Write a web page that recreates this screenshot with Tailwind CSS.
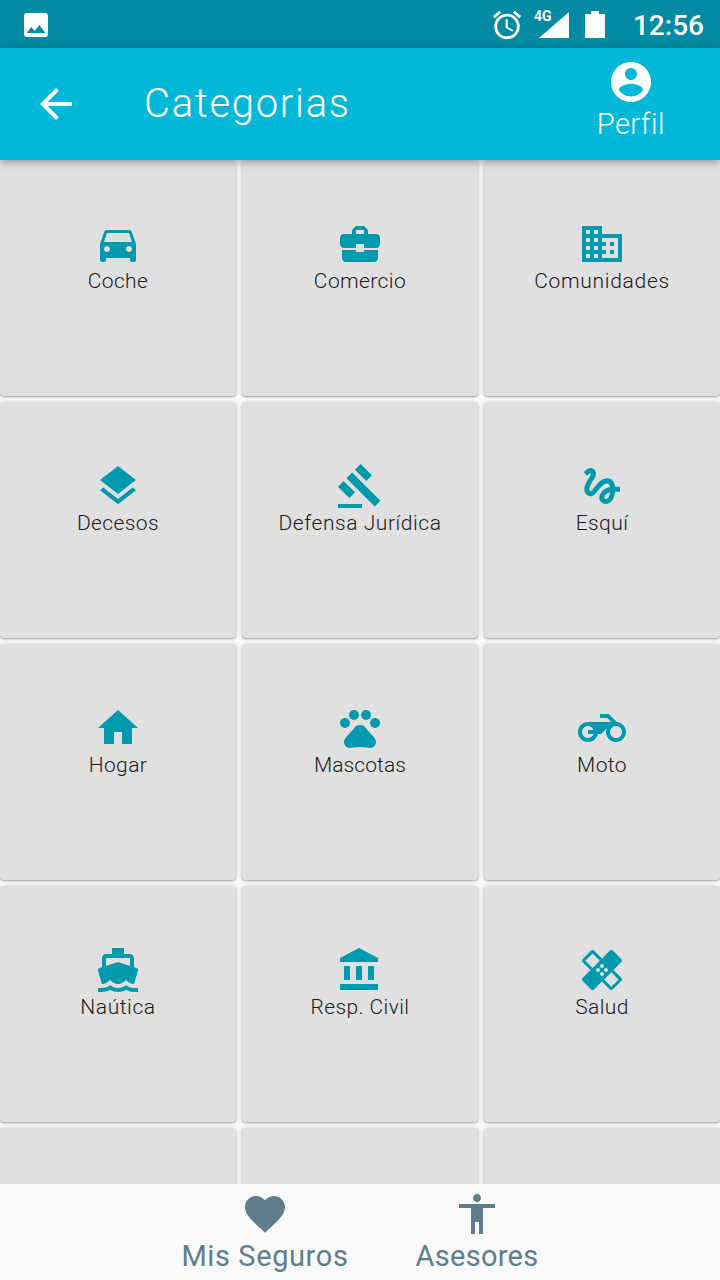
<!DOCTYPE html>
<html lang="es">
<head>
    <meta charset="UTF-8">
    <meta name="viewport" content="width=device-width, initial-scale=1.0">
    <title>Categorias</title>
    <script src="https://cdn.jsdelivr.net/npm/@tailwindcss/browser@4"></script>
</head>
<body class="font-[Roboto,sans-serif]">
<div class="flex flex-col w-[720px] h-[1280px] overflow-hidden bg-[#f8f8f8]">

    <!-- Status bar -->
    <div class="flex items-center h-12 shrink-0 bg-[#028ba3] text-white">
        <svg class="w-8 h-8 ml-5 mt-0.5 fill-white" viewBox="0 0 24 24"><path d="M21 19V5c0-1.1-.9-2-2-2H5c-1.1 0-2 .9-2 2v14c0 1.1.9 2 2 2h14c1.1 0 2-.9 2-2zM8.5 13.5l2.5 3.01L14.5 12l4.5 6H5l3.5-4.5z"/></svg>
        <svg class="w-[34px] h-[34px] ml-auto mt-0.5 fill-white" viewBox="0 0 24 24"><path d="M22 5.72l-4.6-3.86-1.29 1.53 4.6 3.86L22 5.72zM7.88 3.39L6.6 1.86 2 5.71l1.29 1.53 4.59-3.85zM12.5 8H11v6l4.75 2.85.75-1.23-4-2.37V8zM12 4c-4.97 0-9 4.03-9 9s4.02 9 9 9c4.97 0 9-4.03 9-9s-4.03-9-9-9zm0 16c-3.87 0-7-3.13-7-7s3.13-7 7-7 7 3.13 7 7-3.13 7-7 7z"/></svg>
        <div class="relative w-9 h-8 ml-[9px]">
            <svg class="absolute right-0 top-1 w-[30px] h-[26px] fill-white" viewBox="0 0 30 26"><path d="M30 0v26H0z"/></svg>
            <span class="absolute left-px top-0 text-[14px] leading-[16px] font-bold">4G</span>
        </div>
        <svg class="w-5 h-[27px] ml-4 fill-white" viewBox="0 0 20 27"><path d="M6 0h8v3h6v24H0V3h6z"/></svg>
        <span class="ml-7 mr-4 mt-1 text-[28px] font-medium leading-none">12:56</span>
    </div>

    <!-- Header -->
    <header class="relative z-10 flex items-center h-[112px] shrink-0 bg-[#02b8d8] text-white shadow-[0_2px_8px_rgba(0,0,0,0.35)]">
        <button class="ml-8">
            <svg class="w-12 h-12 fill-white" viewBox="0 0 24 24"><path d="M20 11H7.83l5.59-5.59L12 4l-8 8 8 8 1.41-1.41L7.83 13H20v-2z"/></svg>
        </button>
        <h1 class="ml-[64px] text-[40px] leading-none font-light tracking-[1.7px]">Categorias</h1>
        <div class="flex flex-col items-center self-start pt-2.5 ml-auto mr-[55px]">
            <svg class="w-12 h-12 fill-white" viewBox="0 0 24 24"><path d="M12 2C6.48 2 2 6.48 2 12s4.48 10 10 10 10-4.48 10-10S17.52 2 12 2zm0 3c1.66 0 3 1.34 3 3s-1.34 3-3 3-3-1.34-3-3 1.34-3 3-3zm0 14.2c-2.5 0-4.71-1.28-6-3.22.03-1.99 4-3.08 6-3.08 1.99 0 5.97 1.09 6 3.08-1.29 1.94-3.5 3.22-6 3.22z"/></svg>
            <span class="text-[29px] leading-[36px] font-light tracking-[0.5px]">Perfil</span>
        </div>
    </header>

    <!-- Categories -->
    <main class="flex-1 min-h-0 overflow-hidden grid grid-cols-3 auto-rows-[236px] gap-[6px] content-start">
        <div class="flex flex-col items-center pt-[60px] rounded bg-[#e0e0e0] shadow-[0_1px_2px_rgba(0,0,0,0.3),0_0_4px_rgba(0,0,0,0.12)]">
            <svg class="w-12 h-12 fill-[#0099ad]" viewBox="0 0 24 24"><path d="M18.92 6.01C18.72 5.42 18.16 5 17.5 5h-11c-.66 0-1.21.42-1.42 1.01L3 12v8c0 .55.45 1 1 1h1c.55 0 1-.45 1-1v-1h12v1c0 .55.45 1 1 1h1c.55 0 1-.45 1-1v-8l-2.08-5.99zM6.5 16c-.83 0-1.5-.67-1.5-1.5S5.67 13 6.5 13s1.5.67 1.5 1.5S7.33 16 6.5 16zm11 0c-.83 0-1.5-.67-1.5-1.5s.67-1.5 1.5-1.5 1.5.67 1.5 1.5-.67 1.5-1.5 1.5zM5 11l1.5-4.5h11L19 11H5z"/></svg>
            <span class="text-[21px] leading-[26px] text-[#1a1a1a] font-light tracking-[0.4px]">Coche</span>
        </div>
        <div class="flex flex-col items-center pt-[60px] rounded bg-[#e0e0e0] shadow-[0_1px_2px_rgba(0,0,0,0.3),0_0_4px_rgba(0,0,0,0.12)]">
            <svg class="w-12 h-12 fill-[#0099ad]" viewBox="0 0 24 24"><path d="M10 16v-1H3.01L3 19c0 1.11.89 2 2 2h14c1.11 0 2-.89 2-2v-4h-7v1h-4zm10-9h-4.01V5l-2-2h-4l-2 2v2H4c-1.1 0-2 .9-2 2v3c0 1.11.89 2 2 2h6v-2h4v2h6c1.1 0 2-.9 2-2V9c0-1.1-.9-2-2-2zm-6 0h-4V5h4v2z"/></svg>
            <span class="text-[21px] leading-[26px] text-[#1a1a1a] font-light tracking-[0.4px]">Comercio</span>
        </div>
        <div class="flex flex-col items-center pt-[60px] rounded bg-[#e0e0e0] shadow-[0_1px_2px_rgba(0,0,0,0.3),0_0_4px_rgba(0,0,0,0.12)]">
            <svg class="w-12 h-12 fill-[#0099ad]" viewBox="0 0 24 24"><path d="M12 7V3H2v18h20V7H12zM6 19H4v-2h2v2zm0-4H4v-2h2v2zm0-4H4V9h2v2zm0-4H4V5h2v2zm4 12H8v-2h2v2zm0-4H8v-2h2v2zm0-4H8V9h2v2zm0-4H8V5h2v2zm10 12h-8v-2h2v-2h-2v-2h2v-2h-2V9h8v10zm-2-8h-2v2h2v-2zm0 4h-2v2h2v-2z"/></svg>
            <span class="text-[21px] leading-[26px] text-[#1a1a1a] font-light tracking-[0.7px]">Comunidades</span>
        </div>

        <div class="flex flex-col items-center pt-[60px] rounded bg-[#e0e0e0] shadow-[0_1px_2px_rgba(0,0,0,0.3),0_0_4px_rgba(0,0,0,0.12)]">
            <svg class="w-12 h-12 fill-[#0099ad]" viewBox="0 0 24 24"><path d="M11.99 18.54l-7.37-5.73L3 14.07l9 7 9-7-1.63-1.27-7.38 5.74zM12 16l7.36-5.73L21 9l-9-7-9 7 1.63 1.27L12 16z"/></svg>
            <span class="text-[21px] leading-[26px] text-[#1a1a1a] font-light tracking-[0.4px]">Decesos</span>
        </div>
        <div class="flex flex-col items-center pt-[60px] rounded bg-[#e0e0e0] shadow-[0_1px_2px_rgba(0,0,0,0.3),0_0_4px_rgba(0,0,0,0.12)]">
            <svg class="w-12 h-12 fill-[#0099ad]" viewBox="0 0 24 24"><path d="M1 21h12v2H1zM5.245 8.07l2.83-2.827 14.14 14.142-2.828 2.828zM12.317 1l5.657 5.656-2.83 2.83-5.654-5.66zM3.825 9.485l5.657 5.657-2.828 2.828-5.657-5.657z"/></svg>
            <span class="text-[21px] leading-[26px] text-[#1a1a1a] font-light tracking-[0.55px]">Defensa Jurídica</span>
        </div>
        <div class="flex flex-col items-center pt-[60px] rounded bg-[#e0e0e0] shadow-[0_1px_2px_rgba(0,0,0,0.3),0_0_4px_rgba(0,0,0,0.12)]">
            <svg class="w-12 h-12 fill-[#0099ad]" viewBox="0 0 24 24"><path d="M4.59 6.89c.7-.71 1.4-1.35 1.71-1.22.5.2 0 1.03-.3 1.52-.25.42-2.86 3.89-2.86 6.31 0 1.28.48 2.34 1.34 2.98.75.56 1.74.73 2.64.46 1.07-.31 1.95-1.4 3.06-2.77 1.21-1.49 2.83-3.44 4.08-3.44 1.63 0 1.65 1.01 1.76 1.79-3.78.64-5.38 3.67-5.38 5.37 0 1.7 1.44 3.09 3.21 3.09 1.63 0 4.29-1.33 4.69-6.1H21v-2.5h-2.47c-.15-1.65-1.09-4.2-4.03-4.2-2.25 0-4.18 1.91-4.94 2.84-.58.73-2.06 2.48-2.29 2.72-.25.3-.68.84-1.11.84-.45 0-.72-.83-.36-1.92.35-1.09 1.4-2.86 1.85-3.52.78-1.14 1.3-1.92 1.3-3.28C8.95 3.69 7.31 3 6.44 3 5.12 3 3.97 4 3.72 4.25c-.36.36-.66.66-.88.93l1.75 1.71zm9.29 11.66c-.31 0-.74-.26-.74-.72 0-.6.73-2.2 2.87-2.76-.3 2.69-1.43 3.48-2.13 3.48z"/></svg>
            <span class="text-[21px] leading-[26px] text-[#1a1a1a] font-light tracking-[0.4px]">Esquí</span>
        </div>

        <div class="flex flex-col items-center pt-[60px] rounded bg-[#e0e0e0] shadow-[0_1px_2px_rgba(0,0,0,0.3),0_0_4px_rgba(0,0,0,0.12)]">
            <svg class="w-12 h-12 fill-[#0099ad]" viewBox="0 0 24 24"><path d="M10 20v-6h4v6h5v-8h3L12 3 2 12h3v8z"/></svg>
            <span class="text-[21px] leading-[26px] text-[#1a1a1a] font-light tracking-[0.4px]">Hogar</span>
        </div>
        <div class="flex flex-col items-center pt-[60px] rounded bg-[#e0e0e0] shadow-[0_1px_2px_rgba(0,0,0,0.3),0_0_4px_rgba(0,0,0,0.12)]">
            <svg class="w-12 h-12 fill-[#0099ad]" viewBox="0 0 24 24"><circle cx="4.5" cy="9.5" r="2.5"/><circle cx="9" cy="5.5" r="2.5"/><circle cx="15" cy="5.5" r="2.5"/><circle cx="19.5" cy="9.5" r="2.5"/><path d="M17.34 14.86c-.87-1.02-1.6-1.89-2.48-2.91-.46-.54-1.05-1.08-1.75-1.32-.11-.04-.22-.07-.33-.09-.25-.04-.52-.04-.78-.04s-.53 0-.79.05c-.11.02-.22.05-.33.09-.7.24-1.28.78-1.75 1.32-.87 1.02-1.6 1.89-2.48 2.91-1.31 1.31-2.92 2.76-2.62 4.79.29 1.02 1.02 2.03 2.33 2.32.73.15 3.06-.44 5.54-.44h.18c2.48 0 4.81.58 5.54.44 1.31-.29 2.04-1.31 2.33-2.32.31-2.04-1.3-3.49-2.61-4.8z"/></svg>
            <span class="text-[21px] leading-[26px] text-[#1a1a1a] font-light tracking-[0.1px]">Mascotas</span>
        </div>
        <div class="flex flex-col items-center pt-[60px] rounded bg-[#e0e0e0] shadow-[0_1px_2px_rgba(0,0,0,0.3),0_0_4px_rgba(0,0,0,0.12)]">
            <svg class="w-12 h-12 fill-[#0099ad]" viewBox="0 0 24 24"><path d="M19.44 9.03L15.41 5H11v2h3.59l2 2H5c-2.8 0-5 2.2-5 5s2.2 5 5 5c2.46 0 4.45-1.69 4.9-4h1.65l2.77-2.77c-.21.54-.32 1.14-.32 1.77 0 2.8 2.2 5 5 5s5-2.2 5-5c0-2.65-1.97-4.77-4.56-4.97zM7.82 15C7.4 16.15 6.28 17 5 17c-1.63 0-3-1.37-3-3s1.37-3 3-3c1.28 0 2.4.85 2.82 2H5v2h2.82zM19 17c-1.66 0-3-1.34-3-3s1.34-3 3-3 3 1.34 3 3-1.34 3-3 3z"/></svg>
            <span class="text-[21px] leading-[26px] text-[#1a1a1a] font-light tracking-[0.4px]">Moto</span>
        </div>

        <div class="flex flex-col items-center pt-[60px] rounded bg-[#e0e0e0] shadow-[0_1px_2px_rgba(0,0,0,0.3),0_0_4px_rgba(0,0,0,0.12)]">
            <svg class="w-12 h-12 fill-[#0099ad]" viewBox="0 0 24 24"><path d="M20 21c-1.39 0-2.78-.47-4-1.32-2.44 1.71-5.56 1.71-8 0C6.78 20.53 5.39 21 4 21H2v2h2c1.38 0 2.74-.35 4-.99 2.52 1.29 5.48 1.29 8 0 1.26.65 2.62.99 4 .99h2v-2h-2zM3.95 19H4c1.6 0 3.02-.88 4-2 .98 1.12 2.4 2 4 2s3.02-.88 4-2c.98 1.12 2.4 2 4 2h.05l1.89-6.68c.08-.26.06-.54-.06-.78s-.34-.42-.6-.5L20 10.62V6c0-1.1-.9-2-2-2h-3V1H9v3H6c-1.1 0-2 .9-2 2v4.62l-1.29.42c-.26.08-.48.26-.6.5s-.15.52-.06.78L3.95 19zM6 6h12v3.97L12 8 6 9.97V6z"/></svg>
            <span class="text-[21px] leading-[26px] text-[#1a1a1a] font-light tracking-[0.6px]">Naútica</span>
        </div>
        <div class="flex flex-col items-center pt-[60px] rounded bg-[#e0e0e0] shadow-[0_1px_2px_rgba(0,0,0,0.3),0_0_4px_rgba(0,0,0,0.12)]">
            <svg class="w-12 h-12 fill-[#0099ad]" viewBox="0 0 24 24"><path d="M4 10v7h3v-7H4zm6 0v7h3v-7h-3zM2 22h19v-3H2v3zm14-12v7h3v-7h-3zm-4.5-9L2 6v2h19V6l-9.5-5z"/></svg>
            <span class="text-[21px] leading-[26px] text-[#1a1a1a] font-light tracking-[0.4px]">Resp. Civil</span>
        </div>
        <div class="flex flex-col items-center pt-[60px] rounded bg-[#e0e0e0] shadow-[0_1px_2px_rgba(0,0,0,0.3),0_0_4px_rgba(0,0,0,0.12)]">
            <svg class="w-12 h-12 fill-[#0099ad]" viewBox="0 0 24 24"><path d="M17.73 12.02l3.98-3.98c.39-.39.39-1.02 0-1.41l-4.34-4.34c-.39-.39-1.02-.39-1.41 0l-3.98 3.98L8 2.29C7.8 2.1 7.55 2 7.29 2c-.25 0-.51.1-.7.29L2.25 6.63c-.39.39-.39 1.02 0 1.41l3.98 3.98L2.25 16c-.39.39-.39 1.02 0 1.41l4.34 4.34c.39.39 1.02.39 1.41 0l3.98-3.98 3.98 3.98c.2.2.45.29.71.29.26 0 .51-.1.71-.29l4.34-4.34c.39-.39.39-1.02 0-1.41l-3.99-3.98zM12 9c.55 0 1 .45 1 1s-.45 1-1 1-1-.45-1-1 .45-1 1-1zm-4.71 1.96L3.66 7.34l3.63-3.63 3.62 3.62-3.62 3.63zM10 13c-.55 0-1-.45-1-1s.45-1 1-1 1 .45 1 1-.45 1-1 1zm2 2c-.55 0-1-.45-1-1s.45-1 1-1 1 .45 1 1-.45 1-1 1zm2-4c.55 0 1 .45 1 1s-.45 1-1 1-1-.45-1-1 .45-1 1-1zm2.66 9.34l-3.63-3.62 3.63-3.63 3.62 3.62-3.62 3.63z"/></svg>
            <span class="text-[21px] leading-[26px] text-[#1a1a1a] font-light tracking-[0.4px]">Salud</span>
        </div>

        <div class="rounded bg-[#e0e0e0] shadow-[0_1px_2px_rgba(0,0,0,0.3),0_0_4px_rgba(0,0,0,0.12)]"></div>
        <div class="rounded bg-[#e0e0e0] shadow-[0_1px_2px_rgba(0,0,0,0.3),0_0_4px_rgba(0,0,0,0.12)]"></div>
        <div class="rounded bg-[#e0e0e0] shadow-[0_1px_2px_rgba(0,0,0,0.3),0_0_4px_rgba(0,0,0,0.12)]"></div>
    </main>

    <!-- Bottom nav -->
    <nav class="relative z-10 flex justify-center gap-[67px] h-24 shrink-0 bg-[#fafafa] text-[#607d8b]">
        <div class="flex flex-col items-center pt-1.5">
            <svg class="w-12 h-12 fill-[#607d8b]" viewBox="0 0 24 24"><path d="M12 21.35l-1.45-1.32C5.4 15.36 2 12.28 2 8.5 2 5.42 4.42 3 7.5 3c1.74 0 3.41.81 4.5 2.09C13.09 3.81 14.76 3 16.5 3 19.58 3 22 5.42 22 8.5c0 3.78-3.4 6.86-8.55 11.54L12 21.35z"/></svg>
            <span class="text-[29px] leading-[36px] tracking-[0.6px]">Mis Seguros</span>
        </div>
        <div class="flex flex-col items-center pt-1.5">
            <svg class="w-12 h-12 fill-[#607d8b]" viewBox="0 0 24 24"><path d="M12 2c1.1 0 2 .9 2 2s-.9 2-2 2-2-.9-2-2 .9-2 2-2zm9 7h-6v13h-2v-6h-2v6H9V9H3V7h18v2z"/></svg>
            <span class="text-[29px] leading-[36px] tracking-[0.3px]">Asesores</span>
        </div>
    </nav>
</div>
</body>
</html>
